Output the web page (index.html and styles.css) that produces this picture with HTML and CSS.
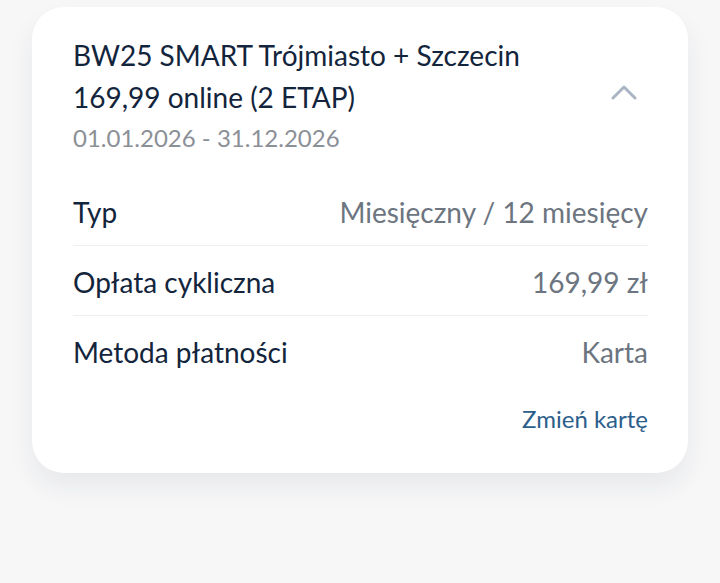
FILE: index.html
```html
<!DOCTYPE html>
<html lang="pl">
<head>
<meta charset="utf-8">
<link rel="stylesheet" href="styles.css">
</head>
<body>
<div class="card">
  <div class="head">
    <div class="head-text">
      <div class="title">BW25 SMART Trójmiasto + Szczecin<br>169,99 online (2 ETAP)</div>
      <div class="dates">01.01.2026 - 31.12.2026</div>
    </div>
    <svg class="chevron" width="26" height="16" viewBox="0 0 26 16"><path d="M2 14 L13 3 L24 14" fill="none" stroke="#aab5c3" stroke-width="3" stroke-linecap="round" stroke-linejoin="round"/></svg>
  </div>
  <div class="rows">
    <div class="row"><span class="label">Typ</span><span class="value">Miesięczny / 12 miesięcy</span></div>
    <div class="row"><span class="label">Opłata cykliczna</span><span class="value">169,99 zł</span></div>
    <div class="row"><span class="label">Metoda płatności</span><span class="value">Karta</span></div>
  </div>
  <div class="actions"><a class="link">Zmień kartę</a></div>
</div>
</body>
</html>
```
FILE: styles.css
```css
html, body {
  margin: 0;
  padding: 0;
  background: #f7f7f8;
  font-family: Lato, "Noto Sans", sans-serif;
}
body {
  padding: 7px 32px 0;
  min-height: 583px;
  box-sizing: border-box;
}
.card {
  background: #ffffff;
  border-radius: 32px;
  box-shadow: 0 14px 26px rgba(30, 40, 60, 0.07);
  padding: 27px 40px 0 41px;
  height: 466px;
  box-sizing: border-box;
}
.head {
  display: flex;
  align-items: flex-start;
}
.head-text {
  flex: 1;
}
.title {
  font-size: 28px;
  line-height: 42px;
  color: #13253c;
}
.dates {
  margin-top: 4px;
  font-size: 24px;
  line-height: 32px;
  color: #8b9097;
}
.chevron {
  margin-top: 50px;
  margin-right: 11px;
}
.rows {
  margin-top: 22px;
}
.row {
  display: flex;
  justify-content: space-between;
  font-size: 28px;
  line-height: 30px;
  padding: 21px 0 18px;
  border-bottom: 1px solid #eceef1;
}
.row:last-child {
  border-bottom: none;
}
.label {
  color: #13253c;
}
.value {
  color: #6c7580;
}
.actions {
  display: flex;
  justify-content: flex-end;
  margin-top: 19px;
}
.link {
  font-size: 24px;
  line-height: 30px;
  color: #2c5e8c;
}
```
